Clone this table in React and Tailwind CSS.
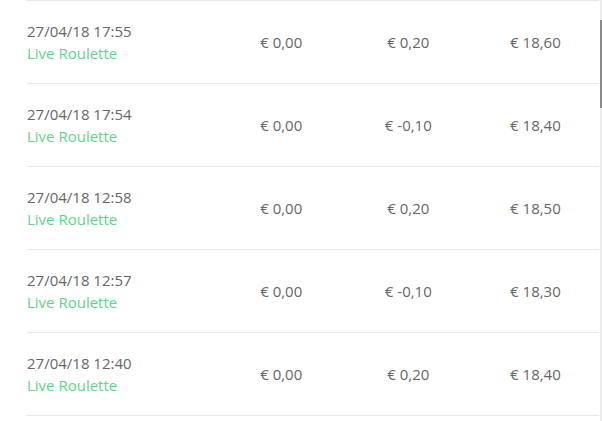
const rows = [
  { date: "27/04/18 17:55", a: "€ 0,00", b: "€ 0,20", c: "€ 18,60" },
  { date: "27/04/18 17:54", a: "€ 0,00", b: "€ -0,10", c: "€ 18,40" },
  { date: "27/04/18 12:58", a: "€ 0,00", b: "€ 0,20", c: "€ 18,50" },
  { date: "27/04/18 12:57", a: "€ 0,00", b: "€ -0,10", c: "€ 18,30" },
  { date: "27/04/18 12:40", a: "€ 0,00", b: "€ 0,20", c: "€ 18,40" },
];

export default function App() {
  return (
    <div className="flex h-[421px] w-[602px] overflow-hidden bg-white font-['Open_Sans',sans-serif] text-[15px] leading-[22px] text-[#666666]">
      <div className="ml-[27px] w-[572px] flex flex-col">
        {rows.map((r, i) => (
          <div
            key={i}
            className="grid h-[83px] shrink-0 grid-cols-[3fr_2fr_2fr_2fr] items-center border-t border-[#e8e8e8]"
          >
            <div className="flex flex-col">
              <span>{r.date}</span>
              <span className="text-[#5fd38d]">Live Roulette</span>
            </div>
            <div className="text-center">{r.a}</div>
            <div className="text-center">{r.b}</div>
            <div className="text-center">{r.c}</div>
          </div>
        ))}
        <div className="border-t border-[#e8e8e8]" />
      </div>
      <div className="ml-[1px] flex w-[2px] flex-col bg-[#ececec]">
        <div className="h-[20px]" />
        <div className="h-[88px] bg-[#8a8a8a]" />
      </div>
    </div>
  );
}
